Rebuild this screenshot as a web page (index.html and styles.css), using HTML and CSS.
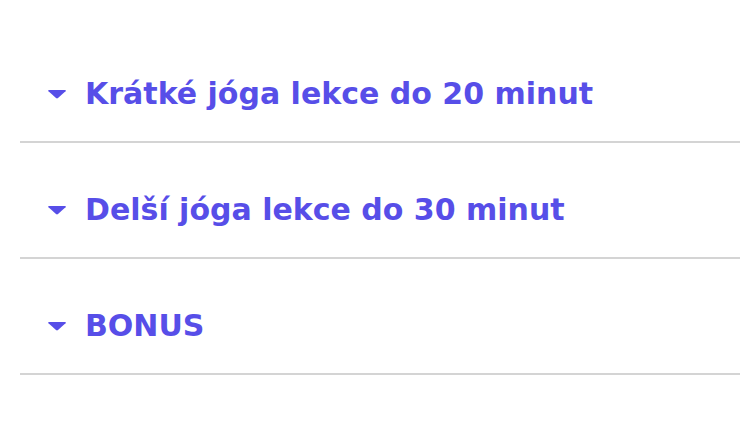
FILE: index.html
```html
<!DOCTYPE html>
<html lang="cs">
<head>
  <meta charset="UTF-8" />
  <meta name="viewport" content="width=device-width, initial-scale=1.0"/>
  <title>Jóga lekce</title>
  <link rel="stylesheet" href="styles.css">
</head>
<body>
<section class="lekce">
  <div class="sekce">
    <svg class="sipka" viewBox="0 0 20 10" width="20" height="10"><path d="M2 1 H18 Q19.5 1 18.5 2.2 L11 9 Q10 9.8 9 9 L1.5 2.2 Q0.5 1 2 1 Z" fill="currentColor"/></svg>
    <span class="nazev">Krátké jóga lekce do 20 minut</span>
  </div>
  <div class="sekce">
    <svg class="sipka" viewBox="0 0 20 10" width="20" height="10"><path d="M2 1 H18 Q19.5 1 18.5 2.2 L11 9 Q10 9.8 9 9 L1.5 2.2 Q0.5 1 2 1 Z" fill="currentColor"/></svg>
    <span class="nazev">Delší jóga lekce do 30 minut</span>
  </div>
  <div class="sekce">
    <svg class="sipka" viewBox="0 0 20 10" width="20" height="10"><path d="M2 1 H18 Q19.5 1 18.5 2.2 L11 9 Q10 9.8 9 9 L1.5 2.2 Q0.5 1 2 1 Z" fill="currentColor"/></svg>
    <span class="nazev">BONUS</span>
  </div>
</section>
</body>
</html>
```

FILE: styles.css
```css
:root {
  --fialova: #574ee8;
  --linka: #d4d4d4;
}
body {
  margin: 0;
  background: #fff;
  font-family: "DejaVu Sans", Inter, sans-serif;
}
.lekce {
  padding: 27px 0 0 20px;
}
.sekce {
  display: flex;
  align-items: center;
  gap: 18px;
  padding: 44px 0 24px 27px;
  border-bottom: 2px solid var(--linka);
  color: var(--fialova);
}
.sipka { flex: none; }
.nazev {
  font-size: 30px;
  line-height: 46px;
  font-weight: 700;
}
```
